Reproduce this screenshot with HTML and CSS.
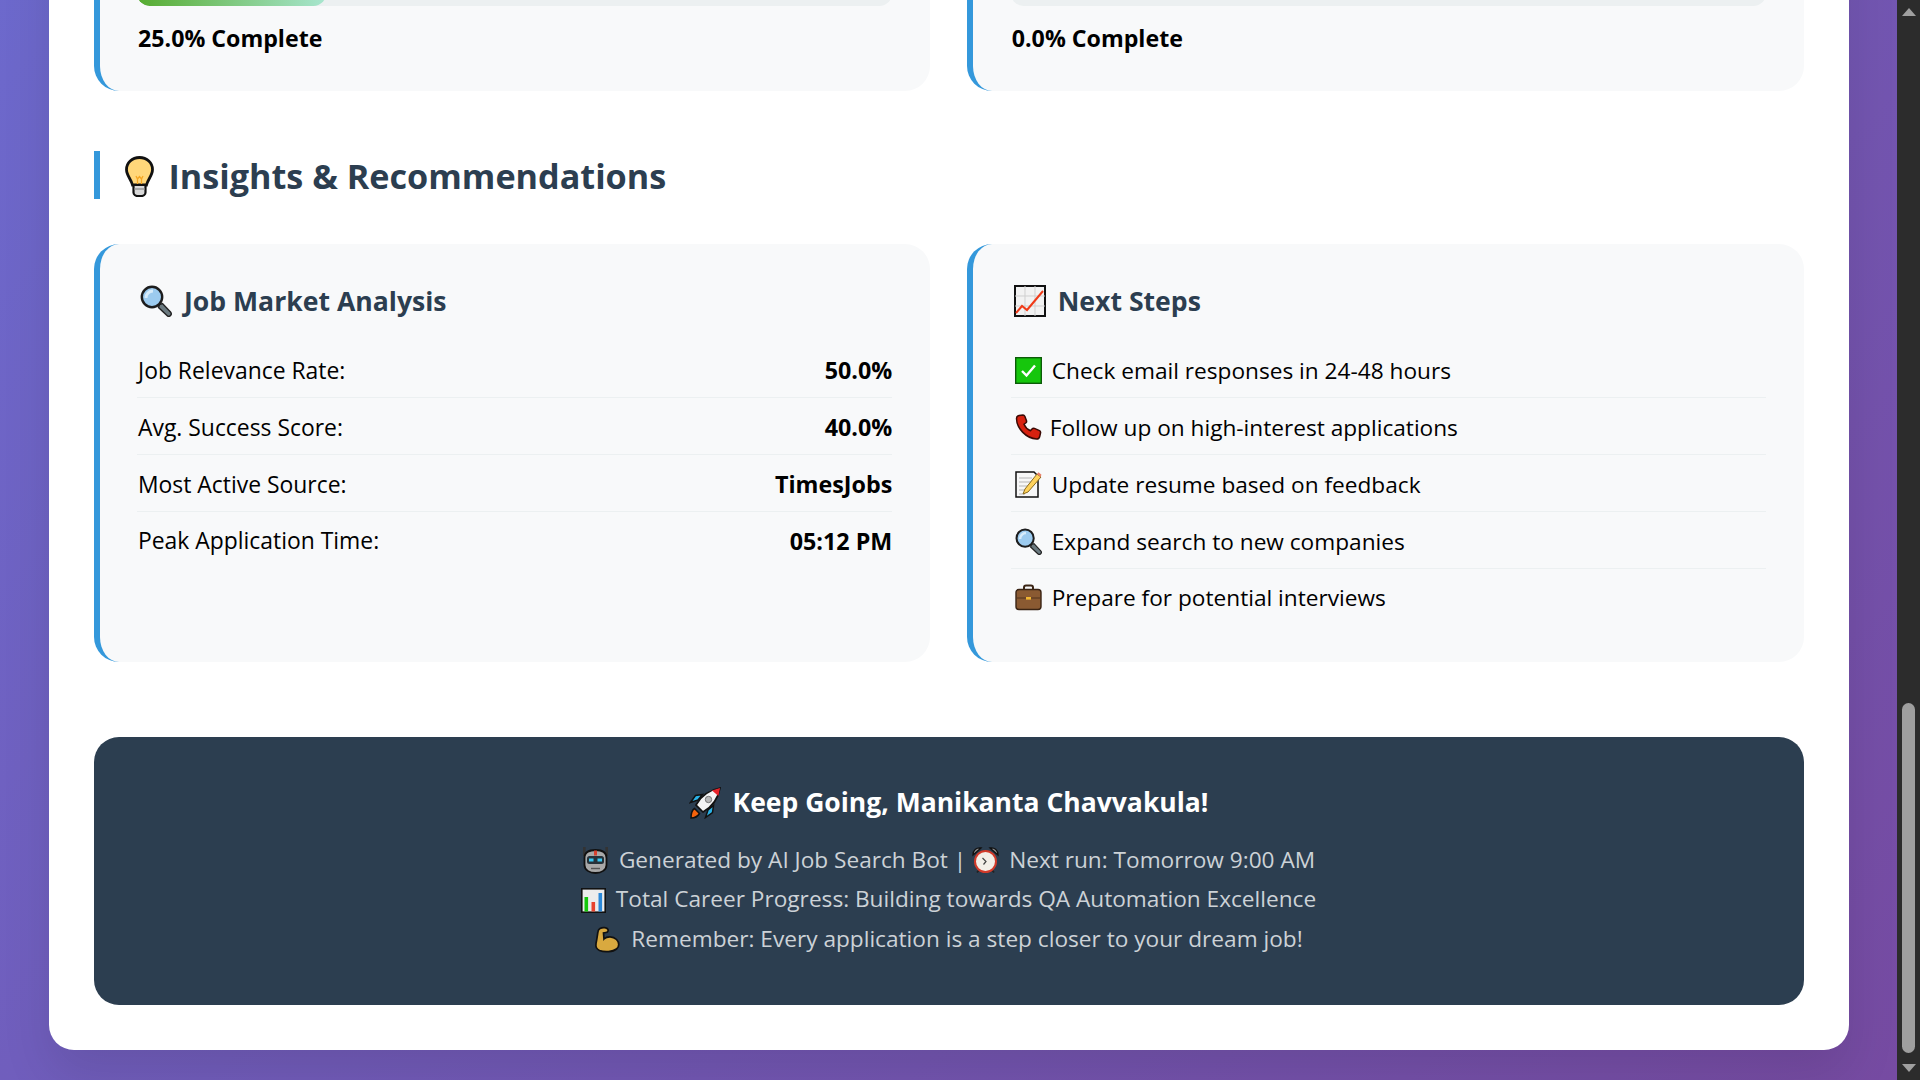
FILE: index.html
```html
<!DOCTYPE html>
<html lang="en">
<head>
    <meta charset="UTF-8">
    <meta name="viewport" content="width=device-width, initial-scale=1.0">
    <title>Job Search Report</title>
    <link rel="stylesheet" href="styles.css">
</head>
<body>
    <svg class="sprite" xmlns="http://www.w3.org/2000/svg">
        <symbol id="i-bulb" viewBox="0 0 29 41">
            <path d="M14.5 1.5C7 1.500 1.500 7 1.500 13.500c0 6 4.500 9.500 6 15.500h14c1.500-6 6-9.500 6-15.500C27.500 7 22 1.500 14.500 1.500z" fill="#ffd77a" stroke="#111" stroke-width="2.800"/>
            <path d="M11 20l1.500 3 2-2.500 2 2.500 1.500-3M12.500 23v6M16.500 23v6" fill="none" stroke="#f5a623" stroke-width="1.300"/>
            <path d="M8.500 29h12v7.500c0 2-2 3.500-4 3.500h-4c-2 0-4-1.500-4-3.500z" fill="#d9d9d9" stroke="#111" stroke-width="2.200"/>
            <path d="M9 33h11" stroke="#888" stroke-width="1.200"/>
        </symbol>
        <symbol id="i-search" viewBox="0 0 32 32">
            <path d="M19.500 19.500l3-1 8 8.500c1 1.200 1 2.500 0 3.500s-2.500 1-3.500 0l-8.500-8z" fill="#6b7a80" stroke="#222" stroke-width="1.400"/>
            <circle cx="12" cy="12" r="10.200" fill="#9ccbef" stroke="#1d1d1d" stroke-width="2.400"/>
            <path d="M6 13a7 7 0 0 1 7-7" fill="none" stroke="#d7ecfb" stroke-width="3"/>
        </symbol>
        <symbol id="i-trend" viewBox="0 0 32 32">
            <rect x="1" y="1" width="30" height="30" fill="#f2f2f2" stroke="#111" stroke-width="2"/>
            <path d="M1 11h30M1 21h30M11 1v30M21 1v30" stroke="#cfcfcf" stroke-width="1"/>
            <path d="M2 28l6-7 5 4L29 6" fill="none" stroke="#f03a17" stroke-width="2"/>
        </symbol>
        <symbol id="i-check" viewBox="0 0 27 27">
            <rect x=".7" y=".7" width="25.600" height="25.600" fill="#16c60c" stroke="#0c5c08" stroke-width="1.400"/>
            <path d="M7 14l4.500 4.500L20 8.500" fill="none" stroke="#fff" stroke-width="2.400"/>
        </symbol>
        <symbol id="i-phone" viewBox="0 0 27 27">
            <path d="M4 1.500L8 1c1 0 1.500.7 2 1.700l1.500 4c.3 1 0 1.700-.8 2.300l-1.700 1.200c1.300 3 3.500 5.200 6.500 6.500l1.500-1.700c.7-.8 1.500-1 2.400-.6l4.600 2c1.200.5 1.800 1.500 1.500 2.600l-.8 3.500c-.3 1.500-1.500 2.500-3 2.500C11 24.500 1.500 14 1.500 4.500 1.500 3 2.500 1.700 4 1.500z" fill="#d8210f" stroke="#3a0a05" stroke-width="1.500"/>
        </symbol>
        <symbol id="i-memo" viewBox="0 0 27 27">
            <path d="M1 1h18l4 4v21H1z" fill="#f7f7f7" stroke="#111" stroke-width="1.500"/>
            <path d="M4 7h13M4 11h12M4 15h9M4 19h7M4 23h6" stroke="#b5b5b5" stroke-width="1"/>
            <path d="M8 23l2-5L22 3l4 3-13 15z" fill="#ffd35c" stroke="#8a6a1c" stroke-width="1"/>
            <path d="M22 3l1.500-1.700 3 2.500L25.500 6z" fill="#e8806a"/>
        </symbol>
        <symbol id="i-case" viewBox="0 0 27 27">
            <path d="M9 6V3.500C9 2.500 9.800 1.500 11 1.500h5c1.200 0 2 1 2 2V6" fill="none" stroke="#3a2414" stroke-width="2"/>
            <rect x="1" y="5.500" width="25" height="20" rx="3" fill="#8a5a32" stroke="#3a2414" stroke-width="1.400"/>
            <path d="M1.500 14h24" stroke="#5a3a20" stroke-width="1.200"/>
            <rect x="11" y="13" width="5" height="2.600" fill="#f2b632"/>
        </symbol>
        <symbol id="i-rocket" viewBox="0 0 32 32">
            <path d="M2 31c0-4 1-8 3.500-9.500L10.500 26.500C9 29 6 31 2 31z" fill="#f7630c" stroke="#111" stroke-width="1.500"/>
            <path d="M9 13L1.500 15.500l5-7 7-1zM19 23l-2.500 7.500 7-5 1-7z" fill="#2bb3e8" stroke="#111" stroke-width="1.500"/>
            <path d="M7 18C12 9 20 3 31 1 29 12 23 20 14 25z" fill="#f4f4f4" stroke="#111" stroke-width="1.700"/>
            <path d="M23 3.500L31 1l-1.600 8z" fill="#e8232a"/>
            <circle cx="19.500" cy="12.500" r="3.200" fill="#b9b9b9" stroke="#777" stroke-width="1"/>
        </symbol>
        <symbol id="i-robot" viewBox="0 0 27 27">
            <path d="M2.300 0v9M24.700 0v9" stroke="#333" stroke-width="2.600"/>
            <path d="M2.500 11C2.500 5 8 3 13.500 3S24.500 5 24.500 11v7c0 5-5 8-11 8s-11-3-11-8z" fill="#a9a9a9" stroke="#111" stroke-width="1.800"/>
            <rect x="12" y="3.500" width="3" height="5" fill="#d8412f"/>
            <rect x="5" y="9" width="17" height="8" rx="2.500" fill="#26323a"/>
            <rect x="7" y="11.500" width="4.500" height="3" fill="#39c5f0"/>
            <rect x="15.500" y="11.500" width="4.500" height="3" fill="#39c5f0"/>
            <path d="M9 21.500h9" stroke="#555" stroke-width="1.400"/>
        </symbol>
        <symbol id="i-clock" viewBox="0 0 27 27">
            <path d="M1 8C1 3 4 .5 9 1zM26 8c0-5-3-7.500-8-7z" fill="#8f8f8f" stroke="#111" stroke-width="1.300"/>
            <path d="M5 25.500l2.500-3M22 25.500l-2.500-3" stroke="#222" stroke-width="1.800"/>
            <circle cx="13.500" cy="14.500" r="10.500" fill="#f3efe8" stroke="#d13a2a" stroke-width="2"/>
            <path d="M10.500 11l3.500 3.500-2.500 3" fill="none" stroke="#444" stroke-width="1.200"/>
        </symbol>
        <symbol id="i-bars" viewBox="0 0 25 25">
            <rect x=".8" y=".8" width="23.400" height="23.400" fill="#ececec" stroke="#111" stroke-width="1.600"/>
            <rect x="3.500" y="9" width="3.600" height="14.500" fill="#16c60c"/>
            <rect x="10.500" y="14" width="3.600" height="9.500" fill="#e8432e"/>
            <rect x="17.500" y="5" width="3.600" height="18.500" fill="#2b88d8"/>
        </symbol>
        <symbol id="i-muscle" viewBox="0 0 27 27">
            <path d="M6 2.500C9 1 13 1.500 14 3.500c.6 1.500-.5 2.700-2 3l-2.500.5.500 6c3-3 9-3 12.500.5 3 3 3 7 0 9.500-3.500 3-12 3.500-17 1.500-3-1.300-4-4-3.500-7C3 13 3.500 8 4 5.500c.2-1.300 1-2.500 2-3z" fill="#d9a93f" stroke="#111" stroke-width="1.700"/>
        </symbol>
    </svg>

    <div class="page">
        <main class="container">
            <div class="grid">
                <div class="card">
                    <div class="progress-bar"><div class="progress-fill" style="width: 25%"></div></div>
                    <div class="progress-text">25.0% Complete</div>
                </div>
                <div class="card">
                    <div class="progress-bar"></div>
                    <div class="progress-text">0.0% Complete</div>
                </div>
            </div>

            <h2 class="section-title"><svg class="icon-bulb"><use href="#i-bulb"/></svg>Insights &amp; Recommendations</h2>

            <div class="grid">
                <div class="card">
                    <h3><svg class="icon-head"><use href="#i-search"/></svg>Job Market Analysis</h3>
                    <div class="row"><span>Job Relevance Rate:</span><strong>50.0%</strong></div>
                    <div class="row"><span>Avg. Success Score:</span><strong>40.0%</strong></div>
                    <div class="row"><span>Most Active Source:</span><strong>TimesJobs</strong></div>
                    <div class="row"><span>Peak Application Time:</span><strong>05:12 PM</strong></div>
                </div>
                <div class="card">
                    <h3><svg class="icon-head"><use href="#i-trend"/></svg>Next Steps</h3>
                    <div class="row step"><svg class="icon-row"><use href="#i-check"/></svg>Check email responses in 24-48 hours</div>
                    <div class="row step"><svg class="icon-row icon-tight"><use href="#i-phone"/></svg>Follow up on high-interest applications</div>
                    <div class="row step"><svg class="icon-row"><use href="#i-memo"/></svg>Update resume based on feedback</div>
                    <div class="row step"><svg class="icon-row"><use href="#i-search"/></svg>Expand search to new companies</div>
                    <div class="row step"><svg class="icon-row"><use href="#i-case"/></svg>Prepare for potential interviews</div>
                </div>
            </div>

            <footer class="footer">
                <h3><svg class="icon-rocket"><use href="#i-rocket"/></svg>Keep Going, Manikanta Chavvakula!</h3>
                <p><svg class="icon-foot"><use href="#i-robot"/></svg>Generated by AI Job Search Bot | <svg class="icon-foot"><use href="#i-clock"/></svg>Next run: Tomorrow 9:00 AM</p>
                <p><svg class="icon-foot icon-bars"><use href="#i-bars"/></svg>Total Career Progress: Building towards QA Automation Excellence</p>
                <p><svg class="icon-foot"><use href="#i-muscle"/></svg>Remember: Every application is a step closer to your dream job!</p>
            </footer>
        </main>
    </div>

    <div class="scrollbar">
        <div class="arrow-up"></div>
        <div class="track"><div class="thumb"></div></div>
        <div class="arrow-down"></div>
    </div>
</body>
</html>
```

FILE: styles.css
```css
* {
    margin: 0;
    padding: 0;
    box-sizing: border-box;
}

body {
    display: flex;
    height: 100vh;
    overflow: hidden;
    font-family: 'Open Sans', 'Noto Sans', sans-serif;
    color: #000;
}

.sprite {
    display: none;
}

/* the page is scrolled to its end, so content sits at the bottom and clips at the top */
.page {
    flex: 1;
    min-width: 0;
    display: flex;
    flex-direction: column;
    justify-content: flex-end;
    align-items: center;
    padding-bottom: 30px;
    overflow: hidden;
    background: linear-gradient(135deg, #667eea 0%, #764ba2 100%) left bottom / 100% 3190px no-repeat;
}

.container {
    flex-shrink: 0;
    width: 1800px;
    padding: 45px;
    background: #fff;
    border-radius: 25px;
    box-shadow: 0 25px 50px rgba(0, 0, 0, 0.1);
}

.grid {
    display: grid;
    grid-template-columns: 1fr 1fr;
    gap: 37.5px;
}

.card {
    padding: 37.5px;
    background: #f8f9fa;
    border-left: 6.25px solid #3498db;
    border-radius: 25px;
}

.progress-bar {
    height: 25px;
    background: #ecf0f1;
    border-radius: 12.5px;
    overflow: hidden;
}

.progress-fill {
    height: 100%;
    background: linear-gradient(90deg, #56ab2f, #a8e6cf);
    border-radius: 12.5px;
}

.progress-text {
    margin-top: 18px;
    padding-left: 1px;
    font-size: 23.2px;
    font-weight: 700;
    line-height: 29px;
}

.section-title {
    display: flex;
    align-items: center;
    height: 48px;
    margin: 60px 0 45px;
    padding: 2px 0 0 25px;
    border-left: 6px solid #3498db;
    color: #2c3e50;
    font-size: 34.2px;
    font-weight: 700;
}

.icon-bulb {
    width: 29px;
    height: 41px;
    margin: 2px 15px 0 0;
}

.card h3 {
    display: flex;
    align-items: center;
    height: 39px;
    margin-bottom: 21px;
    color: #2c3e50;
    font-size: 26.6px;
    font-weight: 700;
}

.icon-head {
    width: 32px;
    height: 32px;
    margin: 0 12px 0 3px;
}

.row {
    display: flex;
    justify-content: space-between;
    align-items: center;
    height: 57px;
    padding: 2px 0 0 1px;
    border-bottom: 1px solid #ecf0f1;
    font-size: 22.9px;
}

.row:last-child {
    height: 55px;
    border-bottom: none;
}

.row strong {
    font-size: 23.3px;
    font-weight: 700;
}

.step {
    justify-content: flex-start;
    font-size: 22.65px;
}

.icon-row {
    width: 27px;
    height: 27px;
    margin: 0 10px 0 3px;
    flex-shrink: 0;
}

.icon-tight {
    margin-right: 8px;
}

.footer {
    margin-top: 75px;
    padding: 45px 45px 47px;
    background: #2c3e50;
    border-radius: 25px;
    text-align: center;
    color: #ccd2d7;
}

.footer h3 {
    margin-bottom: 17.75px;
    color: #fff;
    font-size: 26.5px;
    font-weight: 700;
    line-height: 40px;
}

.icon-rocket {
    width: 32px;
    height: 32px;
    margin-right: 12px;
    vertical-align: -7px;
}

.footer p {
    font-size: 22.65px;
    line-height: 39.5px;
}

.icon-foot {
    width: 27px;
    height: 27px;
    margin-right: 10px;
    vertical-align: -6px;
}

.icon-bars {
    width: 25px;
    height: 25px;
}

.scrollbar {
    flex: 0 0 23px;
    display: flex;
    flex-direction: column;
    align-items: center;
    background: #2c2c2c;
}

.arrow-up,
.arrow-down {
    flex-shrink: 0;
    width: 0;
    height: 0;
    border-left: 7.5px solid transparent;
    border-right: 7.5px solid transparent;
}

.arrow-up {
    margin-top: 8px;
    border-bottom: 8px solid #a0a0a0;
}

.arrow-down {
    margin-bottom: 8px;
    border-top: 8px solid #a0a0a0;
}

.track {
    flex: 1;
    display: flex;
    flex-direction: column;
    justify-content: flex-end;
    padding-bottom: 11px;
}

.thumb {
    width: 13px;
    height: 350px;
    background: #9f9f9f;
    border-radius: 6.5px;
}
```
